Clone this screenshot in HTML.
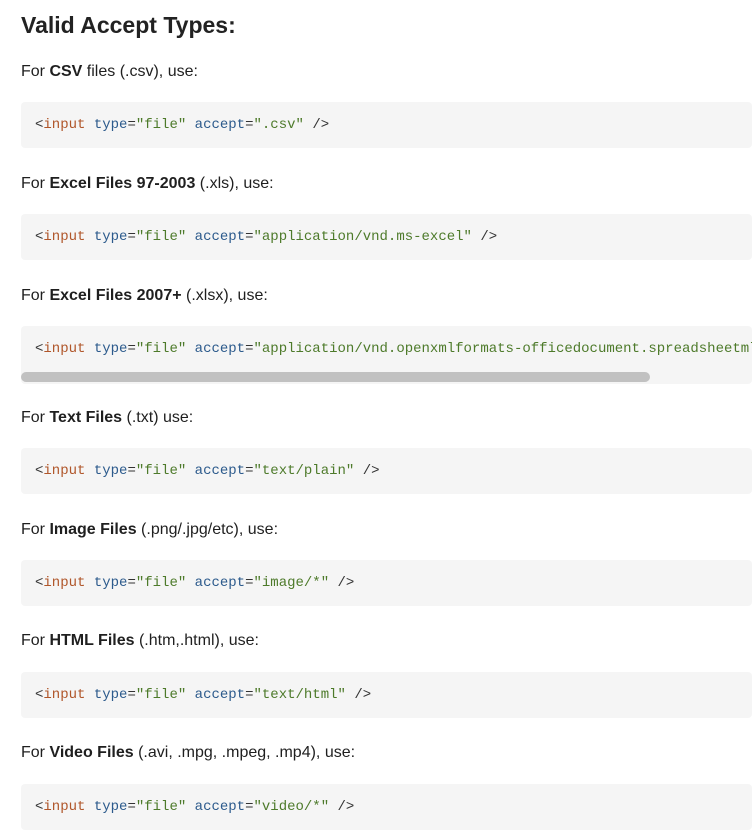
<!DOCTYPE html>
<html><head><style>
body{margin:0;background:#fff;width:756px;height:822px;overflow:hidden;font-family:"Liberation Sans",sans-serif;color:#1f1f1f;}
h2{position:absolute;left:21px;top:12px;margin:0;font-size:23px;font-weight:bold;color:#222;}
p{position:absolute;left:21px;margin:0;font-size:16px;line-height:20px;}
.c{position:absolute;left:21px;width:731px;height:46px;background:#f5f5f5;border-radius:4px;font-family:"Liberation Mono",monospace;font-size:14px;line-height:47px;padding-left:14px;box-sizing:border-box;white-space:pre;overflow:hidden;color:#333;}
.t{color:#b0562a}.a{color:#2c5a8c}.s{color:#4d7a2a}
.sb{position:absolute;left:21px;top:372px;width:629px;height:10px;background:#c1c1c1;border-radius:5px;}
</style></head><body>
<h2>Valid Accept Types:</h2>
<p style="top:62px">For <b>CSV</b> files (.csv), use:</p>
<div class="c" style="top:102px">&lt;<span class="t">input</span> <span class="a">type</span>=<span class="s">"file"</span> <span class="a">accept</span>=<span class="s">".csv"</span> /&gt;</div>
<p style="top:174px">For <b>Excel Files 97-2003</b> (.xls), use:</p>
<div class="c" style="top:214px">&lt;<span class="t">input</span> <span class="a">type</span>=<span class="s">"file"</span> <span class="a">accept</span>=<span class="s">"application/vnd.ms-excel"</span> /&gt;</div>
<p style="top:286px">For <b>Excel Files 2007+</b> (.xlsx), use:</p>
<div class="c" style="top:326px;height:58px">&lt;<span class="t">input</span> <span class="a">type</span>=<span class="s">"file"</span> <span class="a">accept</span>=<span class="s">"application/vnd.openxmlformats-officedocument.spreadsheetml.sheet"</span> /&gt;</div>
<div class="sb"></div>
<p style="top:408px">For <b>Text Files</b> (.txt) use:</p>
<div class="c" style="top:448px">&lt;<span class="t">input</span> <span class="a">type</span>=<span class="s">"file"</span> <span class="a">accept</span>=<span class="s">"text/plain"</span> /&gt;</div>
<p style="top:520px">For <b>Image Files</b> (.png/.jpg/etc), use:</p>
<div class="c" style="top:560px">&lt;<span class="t">input</span> <span class="a">type</span>=<span class="s">"file"</span> <span class="a">accept</span>=<span class="s">"image/*"</span> /&gt;</div>
<p style="top:631px">For <b>HTML Files</b> (.htm,.html), use:</p>
<div class="c" style="top:672px">&lt;<span class="t">input</span> <span class="a">type</span>=<span class="s">"file"</span> <span class="a">accept</span>=<span class="s">"text/html"</span> /&gt;</div>
<p style="top:743px">For <b>Video Files</b> (.avi, .mpg, .mpeg, .mp4), use:</p>
<div class="c" style="top:784px">&lt;<span class="t">input</span> <span class="a">type</span>=<span class="s">"file"</span> <span class="a">accept</span>=<span class="s">"video/*"</span> /&gt;</div>
</body></html>
